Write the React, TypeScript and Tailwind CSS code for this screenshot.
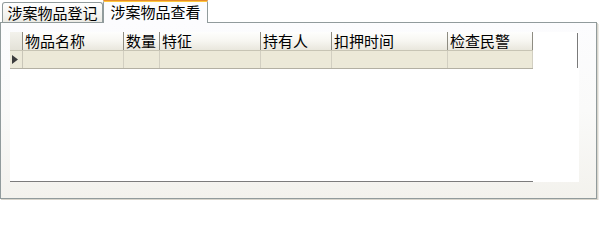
import React from "react";

const cols = [
  { label: "物品名称", w: "w-[101px]" },
  { label: "数量", w: "w-[36px]" },
  { label: "特征", w: "w-[101px]" },
  { label: "持有人", w: "w-[71px]" },
  { label: "扣押时间", w: "w-[116px]" },
  { label: "检查民警", w: "w-[85px]" },
];

export default function App() {
  return (
    <div
      className="w-[600px] h-[200px] bg-white overflow-hidden text-black"
      style={{ fontFamily: '"Noto Sans CJK SC", "Noto Sans", sans-serif' }}
    >
      {/* tab strip */}
      <div className="flex items-end h-[22px] pl-[2px]">
        <div className="w-[101px] h-[20px] border-t border-l border-r border-[#919b9c] rounded-t-[3px] bg-gradient-to-b from-[#ffffff] to-[#ecebe5] flex items-center justify-center text-[15px] leading-[18px] pt-[1px]">
          涉案物品登记
        </div>
        <div className="relative z-10 -mb-px w-[105px] h-[23px] border-l border-r border-[#919b9c] rounded-t-[3px] bg-[#fcfcfe] flex flex-col">
          <div className="h-px bg-[#e68b2c] rounded-t-[2px] -mx-px"></div>
          <div className="h-px bg-[#ffc73c]"></div>
          <div className="flex-1 flex items-center justify-center text-[15px] leading-[18px] pb-[1px]">
            涉案物品查看
          </div>
        </div>
      </div>
      {/* panel */}
      <div className="w-[597px] h-[177px] border border-[#919b9c] bg-gradient-to-b from-[#fcfcfe] via-[#fafaf9] to-[#f3f2ed] shadow-[1px_1px_0_#d8d5cc,2px_2px_0_#ecebe6] pl-[9px] pt-[9px]">
        <div className="w-[569px] h-[150px] bg-white flex flex-col">
          <div className="flex">
            <div className="w-[523px] flex flex-col">
              {/* header */}
              <div className="flex h-[19px] border-b border-[#c7c4b4] bg-gradient-to-b from-[#fefefd] via-[#f7f6f1] to-[#e9e7dd]">
                <div className="w-[13px] border-r border-[#8e8c82] bg-gradient-to-b from-[#f3f2ec] to-[#e4e2d8]"></div>
                {cols.map((c) => (
                  <div
                    key={c.label}
                    className={`${c.w} border-r border-[#8e8c82] pl-[2px] text-[15px] leading-[18px] whitespace-nowrap`}
                  >
                    {c.label}
                  </div>
                ))}
              </div>
              {/* data row */}
              <div className="flex h-[18px] border-b border-[#b3b0a3] bg-[#ece9d8]">
                <div className="w-[13px] border-r border-[#c9c6b8] flex items-center pl-[2px]">
                  <svg width="6" height="9" viewBox="0 0 6 9">
                    <path d="M0 0 L6 4.5 L0 9 Z" fill="#3c3c3c" />
                  </svg>
                </div>
                {cols.map((c) => (
                  <div key={c.label} className={`${c.w} border-r border-[#d2cfc1]`}></div>
                ))}
              </div>
            </div>
            <div className="flex-1"></div>
            <div className="w-px h-[35px] mt-px bg-[#7a7a7a]"></div>
            <div className="w-px"></div>
          </div>
          <div className="flex-1"></div>
          <div className="w-[523px] h-px bg-[#7c7c7c]"></div>
        </div>
      </div>
    </div>
  );
}
